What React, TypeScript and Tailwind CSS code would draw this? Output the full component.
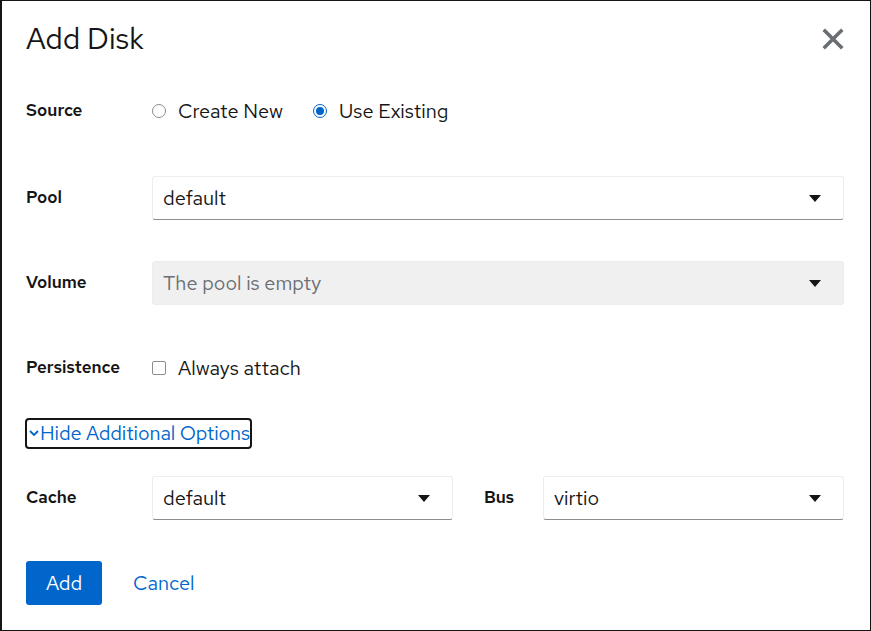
// Add Disk dialog — PatternFly-like modal form

const font = { fontFamily: '"Red Hat Text", "Noto Sans", "Open Sans", sans-serif' };

function Caret() {
  return (
    <svg width="12" height="7" viewBox="0 0 12 7" className="shrink-0">
      <path d="M0 0 H12 L6 7 Z" fill="#151515" />
    </svg>
  );
}

function Select({ value, disabled }: { value: string; disabled?: boolean }) {
  return (
    <div
      className={`flex h-[44px] flex-1 items-center justify-between rounded-[3px] border border-[#ededed] pl-[10px] pr-[22px] text-[20px] ${
        disabled ? 'bg-[#f0f0f0] text-[#6a6e73]' : 'border-b-[#8a8d90] bg-white text-[#151515]'
      }`}
    >
      <span>{value}</span>
      <Caret />
    </div>
  );
}

function Label({ children }: { children: string }) {
  return <div className="w-[126px] shrink-0 text-[17px] font-semibold text-[#151515]">{children}</div>;
}

function Radio({ checked, label }: { checked?: boolean; label: string }) {
  return (
    <label className="flex items-center gap-[5px]">
      <span
        className={`mx-[7px] flex h-[14px] w-[14px] items-center justify-center rounded-full border ${
          checked ? 'border-[#0066cc]' : 'border-[#8a8d90]'
        }`}
      >
        {checked && <span className="h-[8px] w-[8px] rounded-full bg-[#0066cc]" />}
      </span>
      <span className="text-[20px] text-[#151515]">{label}</span>
    </label>
  );
}

export default function App() {
  return (
    <div
      style={font}
      className="h-[631px] w-[871px] overflow-hidden border border-l-2 border-[#151515] bg-white pl-[24px] pr-[26px]"
    >
      {/* Header */}
      <div className="flex items-start justify-between pt-[19px]">
        <h1 className="text-[30px] leading-[36px] text-[#151515]">Add Disk</h1>
        <button className="mt-[8px] text-[#6a6e73]" aria-label="Close">
          <svg width="22" height="22" viewBox="0 0 22 22">
            <path d="M3 3 L19 19 M19 3 L3 19" stroke="#6a6e73" strokeWidth="3.6" strokeLinecap="square" />
          </svg>
        </button>
      </div>

      {/* Source */}
      <div className="mt-[33px] flex h-[44px] items-center">
        <Label>Source</Label>
        <div className="-ml-[7px] flex items-center gap-[23px]">
          <Radio label="Create New" />
          <Radio checked label="Use Existing" />
        </div>
      </div>

      {/* Pool */}
      <div className="mt-[43px] flex h-[44px] items-center">
        <Label>Pool</Label>
        <Select value="default" />
      </div>

      {/* Volume */}
      <div className="mt-[41px] flex h-[44px] items-center">
        <Label>Volume</Label>
        <Select value="The pool is empty" disabled />
      </div>

      {/* Persistence */}
      <div className="mt-[41px] flex h-[44px] items-center">
        <Label>Persistence</Label>
        <label className="flex items-center gap-[12px]">
          <span className="h-[14px] w-[14px] rounded-[2px] border border-[#8a8d90]" />
          <span className="text-[20px] text-[#151515]">Always attach</span>
        </label>
      </div>

      {/* Expander */}
      <div className="mt-[21px] flex h-[44px] items-center">
        <button className="-ml-[1px] flex h-[31px] items-center rounded-[4px] border-2 border-[#151515] text-[20px] tracking-[-0.1px] text-[#0066cc]">
          <svg width="12" height="8" viewBox="0 0 12 8" className="ml-[1px]">
            <path d="M2 2 L6 6 L10 2" stroke="#0066cc" strokeWidth="1.8" fill="none" />
          </svg>
          <span>Hide Additional Options</span>
        </button>
      </div>

      {/* Cache / Bus */}
      <div className="mt-[21px] flex h-[44px] items-center">
        <Label>Cache</Label>
        <Select value="default" />
        <div className="w-[90px] shrink-0 pl-[31px] text-[17px] font-semibold text-[#151515]">Bus</div>
        <Select value="virtio" />
      </div>

      {/* Footer */}
      <div className="mt-[41px] flex h-[44px] items-center gap-[31px]">
        <button className="h-[44px] w-[76px] rounded-[3px] bg-[#0066cc] text-[20px] text-white">Add</button>
        <button className="text-[20px] text-[#0066cc]">Cancel</button>
      </div>
    </div>
  );
}
